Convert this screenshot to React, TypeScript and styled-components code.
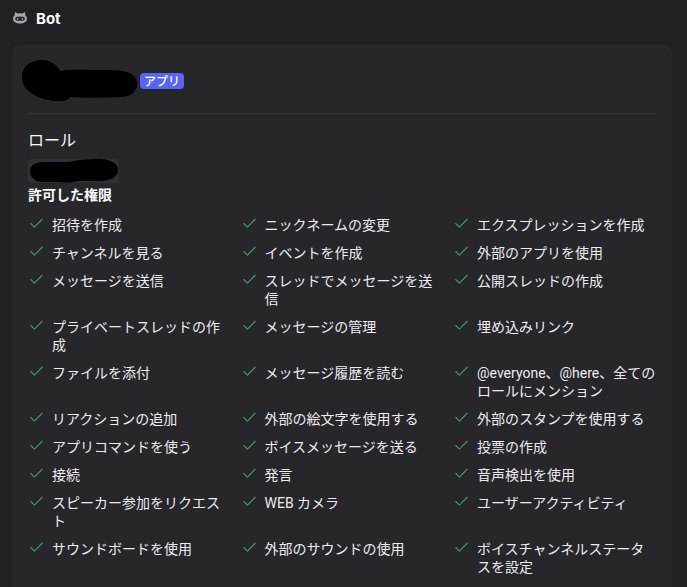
import React from 'react'
import styled, { createGlobalStyle } from 'styled-components'
import { Check } from 'lucide-react'

const PERMISSIONS = [
  '招待を作成',
  'ニックネームの変更',
  'エクスプレッションを作成',
  'チャンネルを見る',
  'イベントを作成',
  '外部のアプリを使用',
  'メッセージを送信',
  'スレッドでメッセージを送信',
  '公開スレッドの作成',
  'プライベートスレッドの作成',
  'メッセージの管理',
  '埋め込みリンク',
  'ファイルを添付',
  'メッセージ履歴を読む',
  '@everyone、@here、全てのロールにメンション',
  'リアクションの追加',
  '外部の絵文字を使用する',
  '外部のスタンプを使用する',
  'アプリコマンドを使う',
  'ボイスメッセージを送る',
  '投票の作成',
  '接続',
  '発言',
  '音声検出を使用',
  'スピーカー参加をリクエスト',
  'WEB カメラ',
  'ユーザーアクティビティ',
  'サウンドボードを使用',
  '外部のサウンドの使用',
  'ボイスチャンネルステータスを設定',
]

export default function App(): JSX.Element {
  return (
    <>
      <GlobalStyle />
      <Page>
        <Header>
          <svg width="16" height="16" viewBox="0 0 16 16" aria-hidden="true">
            <path
              fill="#a5a5ab"
              d="M3 2 5.500 3.600a8 8 0 0 1 5 0L13 2l.4 3.600C14.400 6.500 15 7.600 15 8.800c0 3-3 4.800-7 4.800s-7-1.800-7-4.800c0-1.200.6-2.300 1.600-3.200z"
            />
            <rect x="3.200" y="6.800" width="9.600" height="4" rx="2" fill="#202025" />
            <circle cx="5.600" cy="8.800" r=".9" fill="#a5a5ab" />
            <circle cx="10.400" cy="8.800" r=".9" fill="#a5a5ab" />
          </svg>
          <HeaderTitle>Bot</HeaderTitle>
        </Header>
        <Card>
          <NameRow>
            <NameScribble width="116" height="42" viewBox="0 0 116 42" aria-hidden="true">
              <path
                fill="#000"
                d="M0 17C0 6 10 0 20 0c9 0 15 5 18 11 10-2 24-1 47-1 16 0 28 2 30 12 1 9-6 15-16 15-20 1-40 1-51 0-3 4-8 5-14 4C18 40 0 32 0 17z"
              />
            </NameScribble>
            <AppBadge>アプリ</AppBadge>
          </NameRow>
          <Divider />
          <SectionTitle>ロール</SectionTitle>
          <RoleChip>
            <svg width="88" height="24" viewBox="0 0 88 24" aria-hidden="true">
              <path
                fill="#000"
                d="M0 12C0 6 6 3 14 3h26c6-2 14-3 30-3 10 0 18 4 18 11 0 7-8 11-18 11H48c-6 2-14 2-20 1H12C5 23 0 18 0 12z"
              />
            </svg>
          </RoleChip>
          <PermissionsTitle>許可した権限</PermissionsTitle>
          <PermissionGrid>
            {PERMISSIONS.map(label => (
              <Permission key={label}>
                <CheckIcon size={17} color="#3f9b63" strokeWidth={1.6} />
                <PermissionLabel>{label}</PermissionLabel>
              </Permission>
            ))}
          </PermissionGrid>
        </Card>
      </Page>
    </>
  )
}

const GlobalStyle = createGlobalStyle`
  html, body {
    margin: 0;
    height: 100%;
    overflow: hidden;
    background: #202025;
  }
`

const Page = styled.div`
  height: 587px;
  box-sizing: border-box;
  padding: 0 15px 0 12px;
  background: #202025;
  color: #f0f0f3;
  font-family: 'Noto Sans CJK JP', 'Liberation Sans', sans-serif;
  overflow: hidden;
`

const Header = styled.div`
  display: flex;
  align-items: center;
  gap: 8px;
  height: 36px;
  margin-bottom: 9px;
`

const HeaderTitle = styled.span`
  font-family: 'Inter', 'Liberation Sans', sans-serif;
  font-size: 15px;
  font-weight: 700;
  color: #fbfbfb;
`

const Card = styled.div`
  box-sizing: border-box;
  height: 560px;
  padding: 14px 15px 0 16px;
  background: #26262b;
  border-radius: 8px;
`

const NameRow = styled.div`
  display: flex;
  align-items: center;
  gap: 4px;
  height: 44px;
`

const NameScribble = styled.svg`
  margin-left: -6px;
  flex-shrink: 0;
`

const AppBadge = styled.span`
  display: inline-flex;
  align-items: center;
  justify-content: center;
  width: 44px;
  height: 16px;
  margin-left: -2px;
  background: #5865f2;
  border-radius: 4px;
  color: #fff;
  font-size: 12px;
  font-weight: 500;
  line-height: 16px;
`

const Divider = styled.div`
  height: 1px;
  margin-top: 10px;
  background: #35353b;
`

const SectionTitle = styled.h2`
  margin: 13px 0 8px;
  font-size: 16px;
  font-weight: 400;
  line-height: 24px;
  color: #f8f8fa;
`

const RoleChip = styled.div`
  display: flex;
  align-items: center;
  justify-content: center;
  width: 91px;
  height: 24px;
  background: #2f2f35;
  border-radius: 4px;
`

const PermissionsTitle = styled.h3`
  margin: 2px 0 12px;
  font-size: 14px;
  font-weight: 700;
  line-height: 18px;
  color: #fbfbfb;
`

const PermissionGrid = styled.div`
  display: grid;
  grid-template-columns: repeat(3, 204px);
  column-gap: 8.5px;
  row-gap: 9px;
`

const Permission = styled.div`
  display: flex;
  align-items: flex-start;
  gap: 7px;
`

const CheckIcon = styled(Check)`
  flex-shrink: 0;
`

const PermissionLabel = styled.span`
  padding-top: 1px;
  font-family: 'Roboto', 'Noto Sans CJK JP', sans-serif;
  font-size: 14px;
  line-height: 18px;
  color: #ececef;
`
